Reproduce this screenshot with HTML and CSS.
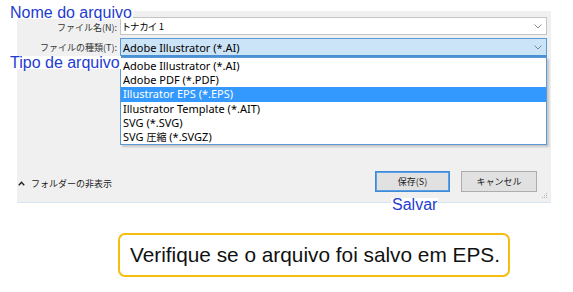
FILE: index.html
```html
<!DOCTYPE html>
<html lang="ja">
<head>
<meta charset="utf-8">
<link rel="stylesheet" href="styles.css">
</head>
<body>
<div class="page">
  <div class="dialog">
    <div class="row">
      <label class="lbl lbl-first">ファイル名(N):</label>
      <div class="field name">
        <span class="val jp">トナカイ 1</span>
        <svg class="chev" width="8" height="5" viewBox="0 0 8 5"><polyline points="0.5,0.5 4,4 7.5,0.5" fill="none" stroke="#8a8a8a" stroke-width="1"/></svg>
      </div>
    </div>
    <div class="row">
      <label class="lbl">ファイルの種類(T):</label>
      <div class="field type">
        <span class="val">Adobe Illustrator (*.AI)</span>
        <svg class="chev" width="8" height="5" viewBox="0 0 8 5"><polyline points="0.5,0.5 4,4 7.5,0.5" fill="none" stroke="#7a8a9a" stroke-width="1"/></svg>
      </div>
    </div>
    <ul class="list">
      <li>Adobe Illustrator (*.AI)</li>
      <li>Adobe PDF (*.PDF)</li>
      <li class="sel">Illustrator EPS (*.EPS)</li>
      <li>Illustrator Template (*.AIT)</li>
      <li>SVG (*.SVG)</li>
      <li>SVG <span class="cjk">圧縮</span> (*.SVGZ)</li>
    </ul>
    <div class="footer">
      <div class="toggle">
        <svg width="7" height="5" viewBox="0 0 7 5"><polyline points="0.8,4.2 3.5,1.2 6.2,4.2" fill="none" stroke="#222" stroke-width="1.4"/></svg>
        <span>フォルダーの非表示</span>
      </div>
      <div class="buttons">
        <button class="btn primary">保存(S)</button>
        <button class="btn">キャンセル</button>
      </div>
      <svg class="grip" width="6" height="6" viewBox="0 0 6 6"><g fill="#b0b0b0"><rect x="4" y="0" width="1" height="1"/><rect x="2" y="2" width="1" height="1"/><rect x="4" y="2" width="1" height="1"/><rect x="0" y="4" width="1" height="1"/><rect x="2" y="4" width="1" height="1"/><rect x="4" y="4" width="1" height="1"/></g></svg>
    </div>
  </div>

  <div class="note note-name">Nome do arquivo</div>
  <div class="note note-type">Tipo de arquivo</div>
  <div class="note note-save">Salvar</div>

  <div class="callout">Verifique se o arquivo foi salvo em EPS.</div>
</div>
</body>
</html>
```

FILE: styles.css
```css
* { box-sizing: border-box; }
html, body { margin: 0; padding: 0; background: #fff; }
body { width: 573px; height: 292px; overflow: hidden; }

.page {
  position: relative;
  padding: 11px 0 0 17px;
  font-family: "Noto Sans", "Noto Sans CJK JP", sans-serif;
}

.jp { font-family: "Noto Sans CJK JP", sans-serif; font-feature-settings: "palt"; font-size: 9.5px; }
.cjk { font-family: "Noto Sans CJK JP", sans-serif; font-size: 10px; }

.dialog {
  position: relative;
  width: 534px;
  height: 192px;
  background: #f0f0f0;
  border-bottom: 1px solid #d6e4f4;
  padding-top: 6px;
  display: flex;
  flex-direction: column;
}

.row {
  display: flex;
  align-items: center;
  margin-bottom: 3px;
}

.lbl {
  width: 103px;
  padding-right: 3px;
  text-align: right;
  font-family: "Noto Sans CJK JP", sans-serif;
  font-size: 9px;
  line-height: 10px;
  color: #333;
  white-space: nowrap;
}
.lbl-first { padding-top: 3px; }

.field {
  width: 427px;
  display: flex;
  align-items: center;
  justify-content: space-between;
  padding: 0 4px 0 2px;
  font-size: 11px;
  color: #000;
}
.field.name {
  height: 18px;
  background: #fff;
  border: 1px solid #c4c4c4;
}
.field.type {
  height: 19px;
  background: #cce4f7;
  border: 1px solid #5b9bd5;
  border-bottom: 2px solid #4a90d2;
}
.chev { display: block; }

.list {
  position: absolute;
  left: 103px;
  top: 46px;
  width: 427px;
  margin: 0;
  padding: 1px 0 0;
  list-style: none;
  background: #fff;
  border: 1px solid #5a9ad6;
  box-shadow: 2px 2px 2px rgba(0,0,0,0.18);
  z-index: 2;
}
.list li {
  height: 14.2px;
  line-height: 14px;
  padding-left: 2px;
  font-size: 11px;
  color: #000;
  white-space: nowrap;
}
.list li.sel { background: #3399ff; color: #fff; }

.footer {
  position: relative;
  margin-top: auto;
  height: 21px;
  margin-bottom: 10px;
  display: flex;
  align-items: center;
  justify-content: space-between;
  padding: 0 14px 0 1px;
}
.toggle {
  display: flex;
  align-items: center;
  gap: 6px;
  font-family: "Noto Sans CJK JP", sans-serif;
  font-size: 9px;
  color: #222;
  padding-top: 3px;
}
.toggle svg { display: block; }
.buttons { display: flex; gap: 11px; }
.btn {
  height: 21px;
  width: 76px;
  background: #e1e1e1;
  border: 1px solid #adadad;
  font-family: "Noto Sans CJK JP", sans-serif;
  font-size: 9px;
  color: #222;
  padding: 0;
}
.btn.primary { width: 75px; border: 1px solid #3c8ad8; box-shadow: inset 0 0 0 1px #5aa0e2; }
.grip { position: absolute; right: 3px; bottom: -7px; }

.note {
  position: absolute;
  font-family: "Liberation Sans", Arial, sans-serif;
  font-size: 16px;
  line-height: 13px;
  color: #1e3cd0;
  z-index: 3;
  padding: 0 1px;
  background: #fff;
}
.note-name { left: 9px; top: 6px; }
.note-type { left: 9px; top: 56px; }
.note-save { left: 391px; top: 198px; }

.callout {
  margin: 30px 0 0 101px;
  width: 392px;
  height: 44px;
  border: 2px solid #f7bd0c;
  border-radius: 7px;
  display: flex;
  align-items: center;
  padding-left: 10px;
  font-family: "Liberation Sans", Arial, sans-serif;
  font-size: 20.8px;
  color: #111;
  white-space: nowrap;
}
```
